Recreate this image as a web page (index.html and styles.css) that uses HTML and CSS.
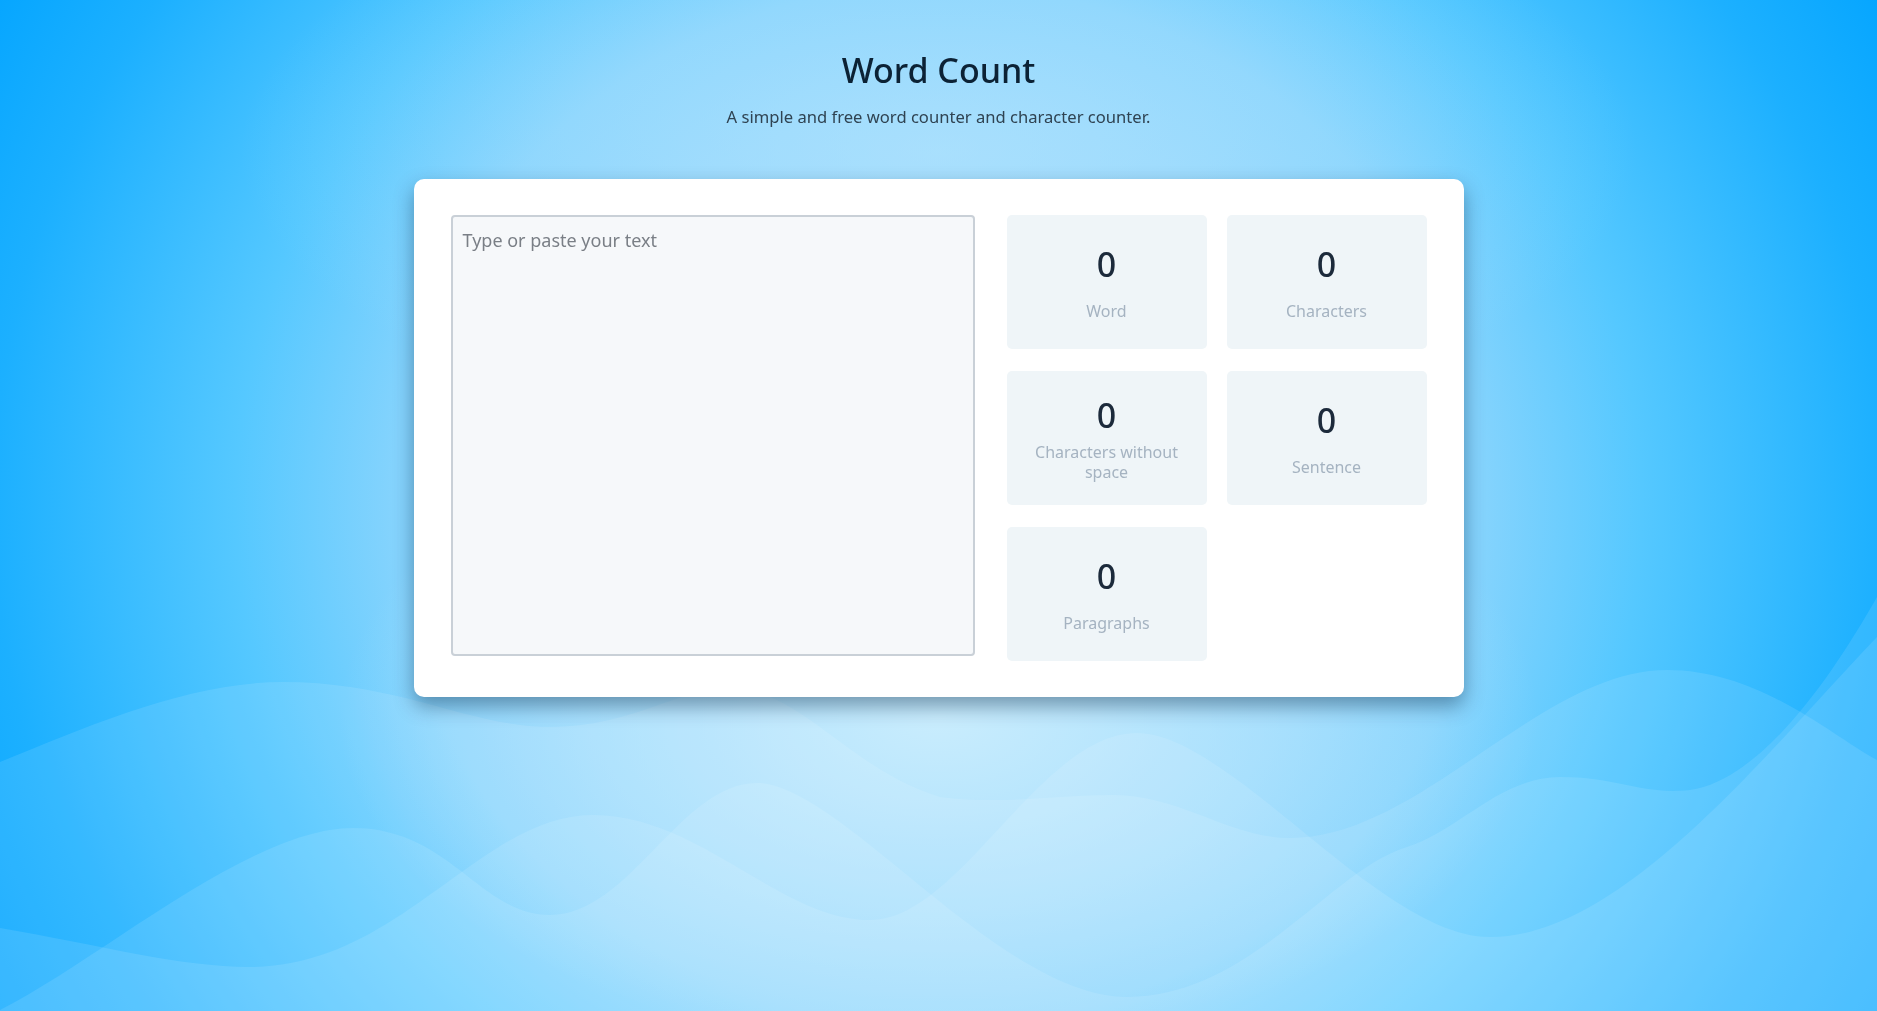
FILE: index.html
```html
<!DOCTYPE html>
<html lang="en">
<head>
<meta charset="utf-8">
<title>Word Count</title>
<link rel="stylesheet" href="styles.css">
</head>
<body>
<svg class="waves" viewBox="0 0 1877 1011" preserveAspectRatio="none" aria-hidden="true">
  <path class="wave" d="M0,762 C90,725 190,682 283,682 C400,682 470,727 550,727 C630,727 680,688 730,688 C800,688 850,770 940,797 C1000,805 1060,795 1113,795 C1180,795 1230,838 1290,838 C1420,838 1540,670 1667,670 C1760,670 1830,735 1877,760 L1877,1011 L0,1011 Z"/>
  <path class="wave" d="M0,928 C100,945 180,967 250,967 C400,967 480,815 593,815 C700,815 780,920 870,920 C960,920 1040,733 1137,733 C1230,733 1380,937 1490,937 C1620,937 1760,760 1877,637 L1877,1011 L0,1011 Z"/>
  <path class="wave" d="M0,1010 C100,960 250,828 353,828 C450,828 480,915 550,915 C630,915 680,783 757,783 C840,783 1000,997 1127,997 C1250,997 1330,870 1407,847 C1460,830 1500,777 1560,777 C1620,777 1640,795 1690,790 C1760,780 1830,680 1877,597 L1877,1011 L0,1011 Z"/>
</svg>
<main class="page">
  <header class="intro">
    <h1 class="title">Word Count</h1>
    <p class="subtitle">A simple and free word counter and character counter.</p>
  </header>
  <section class="card">
    <textarea class="editor" placeholder="Type or paste your text"></textarea>
    <div class="stats">
      <div class="stat"><div class="stat-value">0</div><div class="stat-label">Word</div></div>
      <div class="stat"><div class="stat-value">0</div><div class="stat-label">Characters</div></div>
      <div class="stat"><div class="stat-value">0</div><div class="stat-label">Characters without space</div></div>
      <div class="stat"><div class="stat-value">0</div><div class="stat-label">Sentence</div></div>
      <div class="stat"><div class="stat-value">0</div><div class="stat-label">Paragraphs</div></div>
    </div>
  </section>
</main>
</body>
</html>
```

FILE: styles.css
```css
* { box-sizing: border-box; }

html, body {
  margin: 0;
  height: 1011px;
  overflow: hidden;
}

body {
  font-family: "Noto Sans", "Open Sans", sans-serif;
  background:
    radial-gradient(600px 330px at 50% 71%,
      rgba(205, 238, 253, 0.92) 0%, rgba(205, 238, 253, 0.5) 45%, rgba(205, 238, 253, 0) 100%),
    radial-gradient(700px 300px at 50% 15%,
      rgba(192, 232, 253, 0.5) 0%, rgba(192, 232, 253, 0) 100%),
    radial-gradient(1050px 1000px at 50% 50%,
      #9fdbfd 0%, #8fd6fd 40%, #84d3fd 52%, #55c8ff 67%, #1cb0ff 90%, #06a6ff 103%);
  color: #0f2536;
}

.waves {
  position: fixed;
  left: 0;
  top: 0;
  width: 1877px;
  height: 1011px;
  z-index: 0;
}

.wave {
  fill: #ffffff;
  fill-opacity: 0.1;
}

.page {
  position: relative;
  z-index: 1;
  display: flex;
  flex-direction: column;
  align-items: center;
  padding-top: 47px;
}

.intro {
  text-align: center;
}

.title {
  margin: 0;
  font-size: 34px;
  line-height: 46px;
  font-weight: 500;
  color: #0c2235;
}

.subtitle {
  margin: 12px 0 0;
  font-size: 16.6px;
  line-height: 24px;
  color: #2f4352;
}

.card {
  margin-top: 50px;
  width: 1050px;
  background: #ffffff;
  border-radius: 10px;
  padding: 36px 37px 36px;
  display: grid;
  grid-template-columns: 524px 420px;
  column-gap: 32px;
  align-items: start;
  box-shadow: 0 9px 20px rgba(0, 35, 70, 0.42);
}

.editor {
  display: block;
  width: 524px;
  height: 441px;
  margin: 0;
  padding: 10px 10px;
  border: 2px solid #c9d0d7;
  border-radius: 4px;
  background: #f6f8fa;
  font-family: "Noto Sans", "Open Sans", sans-serif;
  font-size: 18px;
  line-height: 27px;
  color: #333;
  resize: none;
  outline: none;
}

.editor::placeholder {
  color: #7a7f86;
  opacity: 1;
}

.stats {
  display: grid;
  grid-template-columns: 200px 200px;
  grid-auto-rows: 134px;
  column-gap: 20px;
  row-gap: 22px;
}

.stat {
  background: #eff5f8;
  border-radius: 5px;
  display: flex;
  flex-direction: column;
  justify-content: center;
  align-items: center;
  padding: 0 20px;
  text-align: center;
}

.stat-value {
  font-size: 34px;
  line-height: 40px;
  font-weight: 500;
  color: #1c2a3b;
}

.stat-label {
  margin-top: 7px;
  min-height: 30px;
  display: flex;
  align-items: flex-end;
  justify-content: center;
  font-size: 16px;
  line-height: 20px;
  color: #a5b3c1;
}
```
